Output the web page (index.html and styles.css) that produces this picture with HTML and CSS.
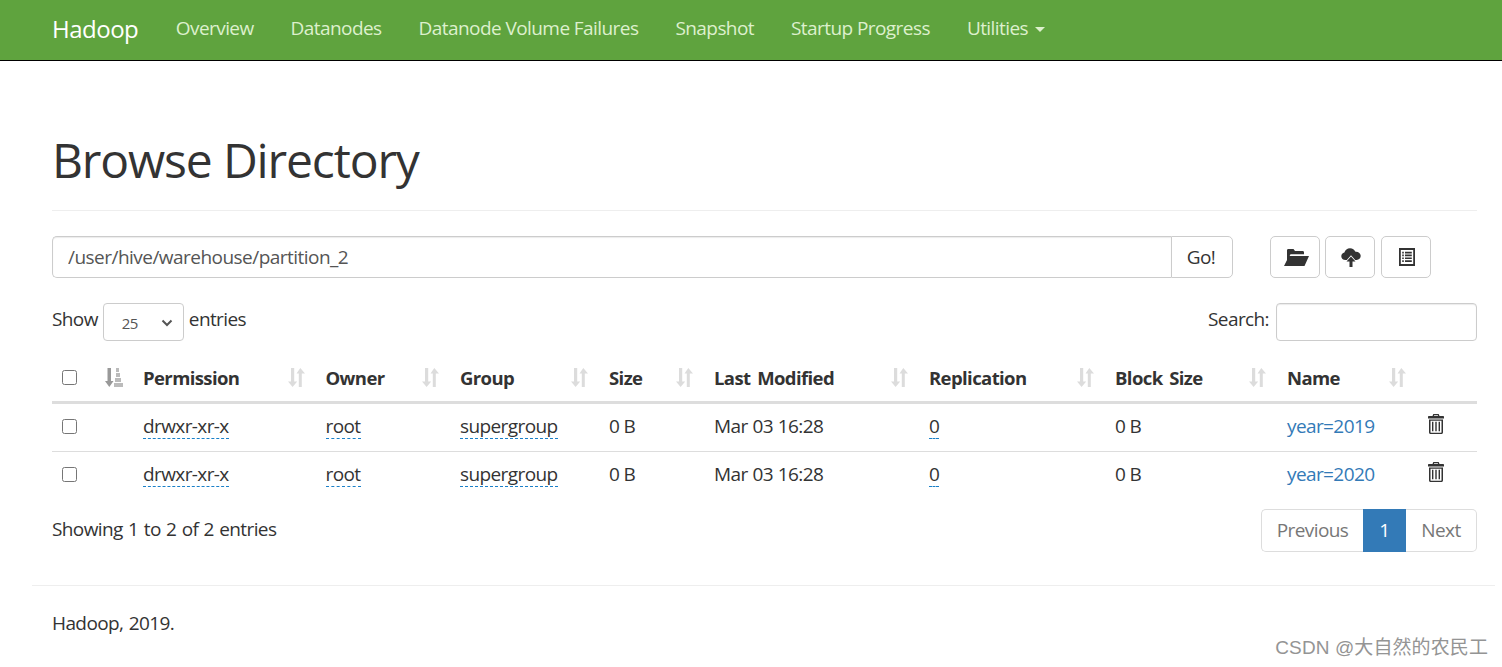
FILE: index.html
```html
<!DOCTYPE html>
<html lang="en">
<head>
<meta charset="utf-8">
<title>Browse Directory</title>
<link rel="stylesheet" href="styles.css">
</head>
<body>
<svg class="defs" width="0" height="0" aria-hidden="true">
  <symbol id="sort" viewBox="0 0 17 19">
    <path d="M3 0h3.200v13.500h3L4.600 19 0 13.500h3z" />
    <path d="M10.800 19h3V5.500H17L12.300 0 8.500 5.500h2.300z" />
  </symbol>
  <symbol id="trash" viewBox="0 0 16 20">
    <path fill-rule="evenodd" d="M5.300 0h5.400l.8 2H15c.6 0 1 .4 1 1v1.500H0V3c0-.6.4-1 1-1h3.500zM6.200 1.200l-.3.8h4.200l-.3-.8zM1 5.500h14v12.700c0 1-.7 1.800-1.600 1.800H2.600C1.700 20 1 19.200 1 18.200zm1.500 1.300v11.400c0 .3.100.5.300.5h10.400c.2 0 .3-.2.300-.5V6.800zM4 7.800h1.400v9.500H4zm3.300 0h1.400v9.500H7.300zm3.300 0H12v9.500h-1.400z"/>
  </symbol>
</svg>
<nav class="navbar">
  <a class="brand">Hadoop</a>
  <a class="nav-link">Overview</a>
  <a class="nav-link">Datanodes</a>
  <a class="nav-link">Datanode Volume Failures</a>
  <a class="nav-link">Snapshot</a>
  <a class="nav-link">Startup Progress</a>
  <a class="nav-link">Utilities <span class="caret"></span></a>
</nav>
<main class="container">
  <header class="page-header"><h1>Browse Directory</h1></header>
  <div class="toolbar">
    <div class="path-group">
      <input class="path-input" type="text" value="/user/hive/warehouse/partition_2">
      <button class="go-btn">Go!</button>
    </div>
    <div class="tool-btns">
      <button class="icon-btn" aria-label="Create directory">
        <svg width="26" height="18" viewBox="0 0 26 18"><path d="M4 4.500V2.300C4 1.600 4.600 1 5.300 1h5.200l1.500 2h7.700c.7 0 1.300.6 1.300 1.300v2H7.500L4 13z M6 8h20l-4.500 10H1z" fill="#333"/></svg>
      </button>
      <button class="icon-btn" aria-label="Upload">
        <svg width="20" height="20" viewBox="0 0 20 20"><path d="M4.500 13C2 13 .3 11.300.3 9.200c0-1.900 1.300-3.400 3.100-3.700C4.100 3 6.300 1.200 9 1.200c2.500 0 4.600 1.500 5.500 3.600 2.900-.3 5.200 1.700 5.200 4.300 0 2.200-1.800 3.900-4 3.900h-1.500L10 8.200 5.800 13z" fill="#333"/><path d="M10 9.500l4.500 5h-3V20h-3v-5.500h-3z" fill="#333"/></svg>
      </button>
      <button class="icon-btn" aria-label="Cut and paste">
        <svg width="16" height="18" viewBox="0 0 16 18"><path fill-rule="evenodd" d="M0 0h16v18H0zM1.800 2v14h12.400V2zM3.200 3.800h1.600v1.600H3.200zm2.800 0h6.800v1.600H6zM3.200 6.600h1.600v1.600H3.200zm2.800 0h6.800v1.600H6zM3.200 9.500h1.600v1.600H3.200zm2.800 0h6.800v1.600H6zM3.200 12.300h1.600v1.600H3.200zm2.800 0h6.800v1.600H6z" fill="#333"/></svg>
      </button>
    </div>
  </div>
  <div class="table-controls">
    <label class="length">Show
      <span class="select-wrap">25
        <svg class="chev" width="12" height="8" viewBox="0 0 12 8"><path d="M1.500 1.500L6 6l4.500-4.500" fill="none" stroke="#555" stroke-width="2"/></svg>
      </span>
      entries</label>
    <label class="search">Search:<input class="search-input" type="text"></label>
  </div>
  <table class="files">
    <colgroup>
      <col class="c-check"><col class="c-sort"><col class="c-perm"><col class="c-owner"><col class="c-group"><col class="c-size"><col class="c-mod"><col class="c-rep"><col class="c-block"><col class="c-name"><col class="c-del">
    </colgroup>
    <thead>
      <tr>
        <th><span class="box"></span></th>
        <th class="sorted"><svg class="sort-active" width="18" height="19" viewBox="0 0 18 19"><path d="M2.500 0H6v13h2.500l-4.200 6L0 13h2.500z" fill="#999"/><path d="M11 0h3v4h-3zM11 5h4v4h-4zM10 10h6v4h-6zM9 15h9v4H9z" fill="#bbb"/></svg></th>
        <th class="sortable">Permission<svg class="sort-ic"><use href="#sort"/></svg></th>
        <th class="sortable">Owner<svg class="sort-ic"><use href="#sort"/></svg></th>
        <th class="sortable">Group<svg class="sort-ic"><use href="#sort"/></svg></th>
        <th class="sortable">Size<svg class="sort-ic"><use href="#sort"/></svg></th>
        <th class="sortable">Last Modified<svg class="sort-ic"><use href="#sort"/></svg></th>
        <th class="sortable">Replication<svg class="sort-ic"><use href="#sort"/></svg></th>
        <th class="sortable">Block Size<svg class="sort-ic"><use href="#sort"/></svg></th>
        <th class="sortable">Name<svg class="sort-ic"><use href="#sort"/></svg></th>
        <th></th>
      </tr>
    </thead>
    <tbody>
      <tr>
        <td><span class="box"></span></td><td></td>
        <td><a class="dotted">drwxr-xr-x</a></td>
        <td><a class="dotted">root</a></td>
        <td><a class="dotted">supergroup</a></td>
        <td>0 B</td>
        <td class="mod">Mar 03 16:28</td>
        <td><a class="dotted">0</a></td>
        <td>0 B</td>
        <td><a class="link">year=2019</a></td>
        <td><svg class="trash"><use href="#trash"/></svg></td>
      </tr>
      <tr>
        <td><span class="box"></span></td><td></td>
        <td><a class="dotted">drwxr-xr-x</a></td>
        <td><a class="dotted">root</a></td>
        <td><a class="dotted">supergroup</a></td>
        <td>0 B</td>
        <td class="mod">Mar 03 16:28</td>
        <td><a class="dotted">0</a></td>
        <td>0 B</td>
        <td><a class="link">year=2020</a></td>
        <td><svg class="trash"><use href="#trash"/></svg></td>
      </tr>
    </tbody>
  </table>
  <div class="table-footer">
    <div class="info">Showing 1 to 2 of 2 entries</div>
    <div class="pagination">
      <a class="page first">Previous</a>
      <a class="page current">1</a>
      <a class="page last">Next</a>
    </div>
  </div>
  <footer class="footer">
    <p>Hadoop, 2019.</p>
    <span class="watermark">CSDN @大自然的农民工</span>
  </footer>
</main>
</body>
</html>
```

FILE: styles.css
```css
* { box-sizing: border-box; }
html, body { margin: 0; padding: 0; height: 667px; overflow: hidden; }
body {
  background: #fff;
  color: #333;
  font-family: "Open Sans", "Noto Sans", "Noto Sans CJK SC", sans-serif;
  font-size: 19px;
  letter-spacing: -0.6px;
}
.defs { position: absolute; }
.navbar {
  display: flex;
  align-items: center;
  height: 61px;
  padding: 0 52px 4px;
  background: #5fa33e;
  border-bottom: 1px solid #000;
}
.brand { color: #fff; font-size: 24px; margin-right: 37.5px; letter-spacing: -0.5px; }
.nav-link { color: #ddf0cd; margin-right: 37px; letter-spacing: -0.57px; }
.caret {
  display: inline-block;
  width: 0; height: 0;
  margin-left: 3px;
  vertical-align: middle;
  border-top: 5px solid #ddf0cd;
  border-left: 5px solid transparent;
  border-right: 5px solid transparent;
}
.container { padding: 0 20px; margin: 0 5px 0 32px; }
.page-header { height: 150px; padding-top: 68px; border-bottom: 1px solid #eee; }
h1 { margin: 0; font-size: 48px; font-weight: 400; line-height: 62px; color: #333; letter-spacing: -1.15px; }
.toolbar { display: flex; margin-top: 25px; }
.path-group { display: flex; width: 1181px; height: 42px; }
.path-input {
  flex: 1;
  height: 42px;
  padding: 0 15px;
  border: 1px solid #ccc;
  border-right: 0;
  border-radius: 5px 0 0 5px;
  font: inherit;
  letter-spacing: -0.53px;
  color: #555;
  box-shadow: inset 0 1px 1px rgba(0,0,0,.08);
}
.go-btn {
  width: 62px;
  padding: 0 2px 0 0;
  border: 1px solid #ccc;
  border-radius: 0 5px 5px 0;
  background: #fff;
  font: inherit;
  letter-spacing: inherit;
  color: #333;
}
.tool-btns { display: flex; gap: 5px; margin-left: 37px; }
.icon-btn {
  display: flex;
  align-items: center;
  justify-content: center;
  width: 50px;
  height: 42px;
  padding: 0 0 0 2px;
  background: #fff;
  border: 1px solid #ccc;
  border-radius: 5px;
}
.tool-btns .icon-btn:last-child { margin-left: 1px; }
.table-controls { display: flex; justify-content: space-between; margin-top: 25px; height: 38px; }
.length { display: flex; align-items: center; gap: 5px; height: 38px; padding-bottom: 6px; }
.select-wrap {
  display: flex;
  align-items: center;
  justify-content: space-between;
  width: 81px;
  height: 38px;
  margin-bottom: -6px;
  padding: 2px 10px 0 18px;
  border: 1px solid #ccc;
  border-radius: 4px;
  font-size: 15px;
  color: #555;
}
.search { display: flex; align-items: center; gap: 7px; height: 38px; padding-bottom: 6px; }
.search-input {
  width: 201px;
  height: 38px;
  margin-bottom: -6px;
  border: 1px solid #ccc;
  border-radius: 4px;
  box-shadow: inset 0 1px 1px rgba(0,0,0,.08);
}
.files { width: 1425px; margin-top: 14px; border-collapse: collapse; table-layout: fixed; }
.c-check { width: 43px; }
.c-sort { width: 38px; }
.c-perm { width: 182.500px; }
.c-owner { width: 134.500px; }
.c-group { width: 149px; }
.c-size { width: 105px; }
.c-mod { width: 215px; }
.c-rep { width: 186px; }
.c-block { width: 172px; }
.c-name { width: 140px; }
.c-del { width: 60px; }
th {
  position: relative;
  height: 47px;
  padding: 0 10px;
  text-align: left;
  font-weight: 700;
  font-size: 18.5px;
  word-spacing: 2.5px;
  border-bottom: 3px solid #ddd;
}
td {
  height: 49px;
  padding: 0 10px 2px;
  border-bottom: 1px solid #ddd;
  white-space: nowrap;
}
.mod { word-spacing: 0.5px; }
tbody tr:last-child td { border-bottom: 0; padding-bottom: 3px; }
.sort-ic {
  position: absolute;
  right: 11px;
  top: 13px;
  width: 17px;
  height: 19px;
  fill: #dcdcdc;
}
.sorted svg { position: absolute; left: 10px; top: 13px; }
.box {
  display: block;
  width: 15px;
  height: 15px;
  border: 1.5px solid #767676;
  border-radius: 2.500px;
  background: #fff;
}
.dotted { display: inline-block; line-height: 23px; color: #333; border-bottom: 1px dashed #1a80c8; }
.link { color: #337ab7; }
.trash { display: block; width: 16px; height: 20px; fill: #333; margin: -4px 0 0 1px; }
.table-footer { display: flex; justify-content: space-between; margin-top: 9px; }
.info { padding-top: 7px; word-spacing: 1px; }
.pagination { display: flex; height: 43px; }
.page { display: flex; align-items: center; justify-content: center; height: 43px; padding-bottom: 2px; border: 1px solid #ddd; color: #777; }
.first { width: 102px; border-right: 0; border-radius: 5px 0 0 5px; }
.current { width: 43px; background: #337ab7; border-color: #337ab7; color: #fff; }
.last { width: 71px; border-left: 0; border-radius: 0 5px 5px 0; }
.footer {
  position: relative;
  margin: 33px -18px 0 -20px;
  padding: 24px 20px 0;
  height: 80px;
  border-top: 1px solid #eee;
  word-spacing: 1px;
}
.footer p { margin: 0; }
.watermark {
  position: absolute;
  right: 7px;
  top: 46px;
  font-family: "Liberation Sans", "Noto Sans CJK SC", sans-serif;
  font-size: 19px;
  letter-spacing: 0.1px;
  word-spacing: 0;
  color: #949494;
}
```
